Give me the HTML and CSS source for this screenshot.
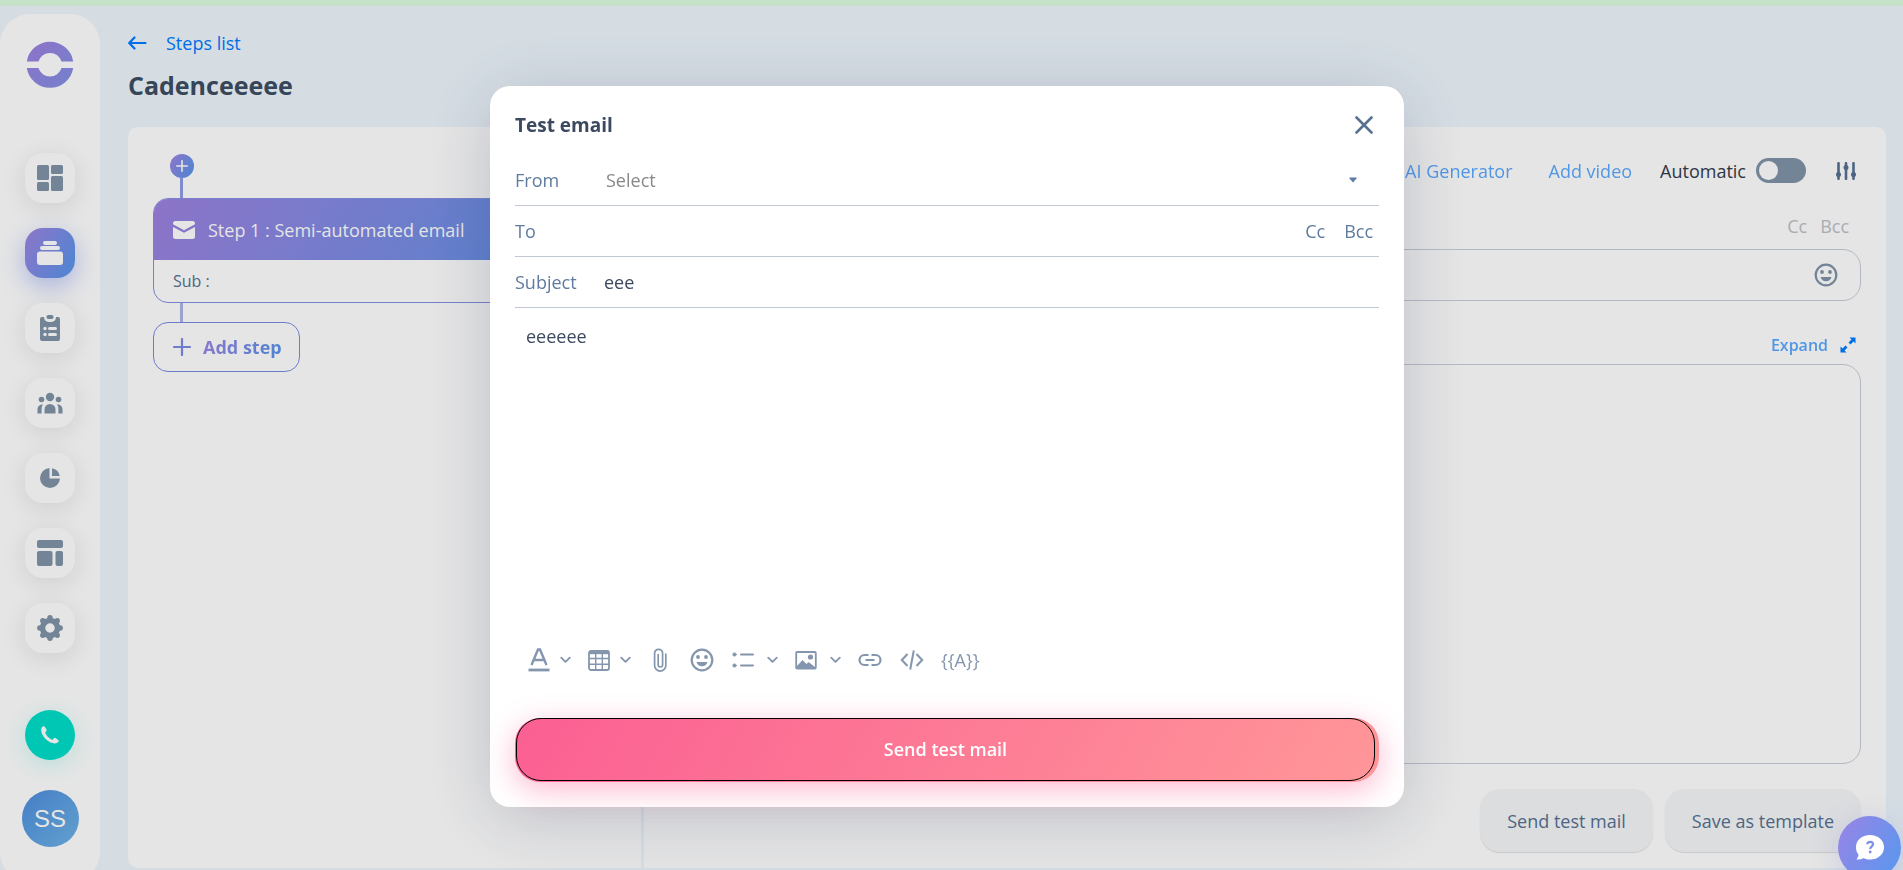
FILE: index.html
```html
<!DOCTYPE html>
<html lang="en">
<head>
<meta charset="utf-8">
<title>Cadence - Test email</title>
<link rel="stylesheet" href="styles.css">
</head>
<body>
<svg class="defs" width="0" height="0" aria-hidden="true">
  <defs>
    <linearGradient id="brand" x1="0" y1="0" x2="1" y2="1"><stop offset="0" stop-color="#9f80e0"/><stop offset="1" stop-color="#8190e4"/></linearGradient>
    <symbol id="chev" viewBox="0 0 11 8"><path d="M1.200 1.600l4.300 4.300 4.300-4.300" fill="none" stroke="currentColor" stroke-width="1.800" stroke-linecap="round" stroke-linejoin="round"/></symbol>
    <symbol id="smile" viewBox="0 0 24 24"><circle cx="12" cy="12" r="10.300" fill="none" stroke="currentColor" stroke-width="2.200"/><circle cx="8" cy="9" r="1.900" fill="currentColor"/><circle cx="16" cy="9" r="1.900" fill="currentColor"/><path d="M6.500 14h11c-.7 2.700-2.900 4.300-5.500 4.300S7.200 16.700 6.500 14z" fill="currentColor"/></symbol>
  </defs>
</svg>
<div class="topbar"></div>
<div class="app">
  <nav class="sidebar" aria-label="Main">
    <svg class="logo" viewBox="0 0 48 48" fill="url(#brand)"><path d="M.8 21.500A23.500 23.500 0 0 1 47.200 21.500H35.500A12 12 0 0 0 12.500 21.500zM.8 28A23.500 23.500 0 0 0 47.200 28H35.500A12 12 0 0 1 12.500 28z"/></svg>
    <div class="nav-items">
      <a class="nav-item" href="#" aria-label="Dashboard"><svg width="26" height="26" viewBox="0 0 26 26" fill="currentColor"><rect x="0" y="0" width="12" height="15" rx="1.500"/><rect x="14" y="0" width="12" height="9" rx="1.500"/><rect x="0" y="17" width="12" height="9" rx="1.500"/><rect x="14" y="11" width="12" height="15" rx="1.500"/></svg></a>
      <a class="nav-item active" href="#" aria-label="Cadences"><svg width="26" height="26" viewBox="0 0 26 26" fill="currentColor"><rect x="6" y="1" width="14" height="4" rx="2"/><rect x="3" y="6" width="20" height="4" rx="2"/><rect x="0" y="11.500" width="26" height="13.500" rx="3"/></svg></a>
      <a class="nav-item" href="#" aria-label="Tasks"><svg width="20" height="26" viewBox="0 0 20 26"><path d="M2 2h2c0 3 2 5 6 5s6-2 6-5h2a2 2 0 0 1 2 2v20a2 2 0 0 1-2 2H2a2 2 0 0 1-2-2V4a2 2 0 0 1 2-2z" fill="currentColor"/><rect x="6.500" y="0" width="7" height="4" rx="1.800" fill="currentColor"/><g fill="#fff"><rect x="8" y="12" width="9" height="3" rx="1.500"/><rect x="8" y="18" width="9" height="3" rx="1.500"/><circle cx="5" cy="13.500" r="1.700"/><circle cx="5" cy="19.500" r="1.700"/></g></svg></a>
      <a class="nav-item" href="#" aria-label="People"><svg width="26" height="22" viewBox="0 0 26 22" fill="currentColor"><circle cx="13" cy="5" r="4.200"/><circle cx="4.500" cy="7.500" r="2.800"/><circle cx="21.500" cy="7.500" r="2.800"/><path d="M7.500 21.500v-4a5.500 5.500 0 0 1 11 0v4zM.5 21.500v-4c0-3 2-5 5.500-5-1.200 1.600-1.400 3-1.400 5v4zM25.500 21.500v-4c0-3-2-5-5.500-5 1.200 1.600 1.400 3 1.400 5v4z"/></svg></a>
      <a class="nav-item" href="#" aria-label="Statistics"><svg width="20" height="20" viewBox="0 0 20 20" fill="currentColor"><path d="M9.500 0v10.500H20A10 10 0 1 1 9.500 0z"/><path d="M12 .2A10 10 0 0 1 19.800 8H12z"/></svg></a>
      <a class="nav-item" href="#" aria-label="Templates"><svg width="26" height="26" viewBox="0 0 26 26" fill="currentColor"><rect x="0" y="0" width="26" height="8" rx="2"/><rect x="0" y="11" width="15.500" height="15" rx="2"/><rect x="18.500" y="11" width="7.500" height="15" rx="2"/></svg></a>
      <a class="nav-item" href="#" aria-label="Settings"><svg width="26" height="26" viewBox="0 0 26 26"><circle cx="13" cy="13" r="7.500" fill="none" stroke="currentColor" stroke-width="5.500"/><g fill="currentColor"><circle cx="13" cy="2.800" r="2.700"/><circle cx="13" cy="23.200" r="2.700"/><circle cx="2.800" cy="13" r="2.700"/><circle cx="23.200" cy="13" r="2.700"/><circle cx="5.800" cy="5.800" r="2.700"/><circle cx="20.200" cy="5.800" r="2.700"/><circle cx="5.800" cy="20.200" r="2.700"/><circle cx="20.200" cy="20.200" r="2.700"/></g></svg></a>
    </div>
    <button class="call" type="button" aria-label="Call"><svg width="18" height="18" viewBox="0 0 18 18" fill="currentColor"><path d="M1.200.9C2 .2 3 0 3.600.5l1.900 3.100c.3.600.1 1.100-.3 1.600L4.100 6.500c1 3 3.700 6 7.300 7.400l1.300-1.400c.5-.5 1-.6 1.600-.4l3 2c.6.500.5 1.300 0 1.900-1.200 1.400-3.300 1.700-5.700 1.100C6 15.500 1.200 10.300.300 5.200 0 3.200.3 1.900 1.200.9z"/></svg></button>
    <button class="avatar" type="button">SS</button>
  </nav>
  <main class="main">
    <a class="back" href="#"><svg width="19" height="14" viewBox="0 0 19 14" fill="none" stroke="currentColor" stroke-width="2.200" stroke-linecap="round" stroke-linejoin="round"><path d="M17.500 7H1.500M6.500 1.500L1.200 7l5.300 5.500"/></svg>Steps list</a>
    <h1 class="title">Cadenceeeee</h1>
    <div class="panel">
      <section class="steps">
        <button class="add-dot" type="button" aria-label="Add step before"><svg width="12" height="12" viewBox="0 0 12 12" stroke="currentColor" stroke-width="1.600" stroke-linecap="round"><path d="M6 .8v10.400M.8 6h10.400"/></svg></button>
        <div class="link-line"></div>
        <article class="step">
          <header class="step-head"><svg width="22" height="18" viewBox="0 0 22 18" fill="currentColor"><path d="M2.500 0h17A2.500 2.500 0 0 1 22 2.500v.8L11 9.200 0 3.300v-.8A2.500 2.500 0 0 1 2.500 0z"/><path d="M0 6l11 5.800L22 6v9.500a2.500 2.500 0 0 1-2.500 2.500h-17A2.500 2.500 0 0 1 0 15.500z"/></svg>Step 1 : Semi-automated email</header>
          <p class="step-sub">Sub :</p>
        </article>
        <div class="link-line light"></div>
        <button class="add-step" type="button"><svg width="18" height="18" viewBox="0 0 18 18" stroke="#7b8be4" stroke-width="2.200" stroke-linecap="round"><path d="M9 1v16M1 9h16"/></svg><span>Add step</span></button>
      </section>
      <section class="compose">
        <div class="tools">
          <a class="soft-link" href="#">AI Generator</a>
          <a class="soft-link" href="#">Add video</a>
          <label class="auto">Automatic <input class="switch" type="checkbox"></label>
          <button class="plain" type="button" aria-label="Options"><svg width="20" height="18" viewBox="0 0 20 18" fill="none" stroke="currentColor" stroke-width="2.600" stroke-linecap="round"><path d="M2.500 1.200v15.600M10 1.200v15.600M17.500 1.200v15.600"/><g fill="currentColor" stroke="none"><circle cx="2.500" cy="12.500" r="2.500"/><circle cx="10" cy="5.500" r="2.500"/><circle cx="17.500" cy="12.500" r="2.500"/></g></svg></button>
        </div>
        <div class="copies"><button class="plain" type="button">Cc</button><button class="plain" type="button">Bcc</button></div>
        <div class="subject-box"><input type="text" aria-label="Subject"><svg width="24" height="24"><use href="#smile"/></svg></div>
        <button class="expand" type="button"><span>Expand</span><svg width="16" height="16" viewBox="0 0 16 16" fill="currentColor"><path d="M9.500.5h6v6l-2-2-3 3-2-2 3-3zM6.500 15.500h-6v-6l2 2 3-3 2 2-3 3z"/></svg></button>
        <textarea class="message" aria-label="Message"></textarea>
        <div class="actions"><button class="soft-button" type="button">Send test mail</button><button class="soft-button" type="button">Save as template</button></div>
      </section>
    </div>
  </main>
</div>

<div class="overlay">
  <form class="modal" role="dialog" aria-labelledby="modal-title">
    <header class="modal-head">
      <h2 id="modal-title">Test email</h2>
      <button class="plain" type="button" aria-label="Close"><svg width="18" height="18" viewBox="0 0 18 18" stroke="currentColor" stroke-width="2.600" stroke-linecap="round"><path d="M1.500 1.500l15 15M16.500 1.500l-15 15"/></svg></button>
    </header>
    <div class="row"><label for="from">From</label><select id="from"><option>Select</option></select><svg class="caret" width="8" height="6" viewBox="0 0 8 6" fill="currentColor"><path d="M.5.500h7v1L4 5.500.500 1.500z"/></svg></div>
    <div class="row"><label for="to">To</label><input id="to" type="text"><div class="row-copies"><button class="plain" type="button">Cc</button><button class="plain" type="button">Bcc</button></div></div>
    <div class="row"><label for="subject">Subject</label><input id="subject" type="text" value="eee"></div>
    <textarea class="editor" aria-label="Email body">eeeeee</textarea>
    <div class="toolbar">
      <button class="tool" type="button" aria-label="Text style"><svg width="24" height="24" viewBox="0 0 24 24" fill="none" stroke="currentColor"><path d="M4.500 17L11 1.500h2L19.500 17M7.500 12h9" stroke-width="2.400"/><path d="M1.500 22h21" stroke-width="2.800"/></svg><svg width="11" height="8"><use href="#chev"/></svg></button>
      <button class="tool" type="button" aria-label="Table"><svg width="24" height="24" viewBox="0 0 24 24" fill="none" stroke="currentColor"><rect x="2" y="3" width="20" height="19" rx="2" stroke-width="1.800"/><path d="M2 4.500h20" stroke-width="3.400"/><path d="M2 10.500h20M2 16.300h20M8.700 5.500v16M15.300 5.500v16" stroke-width="1.400"/></svg><svg width="11" height="8"><use href="#chev"/></svg></button>
      <button class="tool single" type="button" aria-label="Attach"><svg width="24" height="24" viewBox="0 0 24 24" fill="none" stroke="currentColor" stroke-width="1.700" stroke-linecap="round"><path d="M17.800 6v11.500a5.600 5.600 0 0 1-11.200 0V5.300a4 4 0 0 1 8 0v11.500a2.200 2.200 0 0 1-4.400 0V6.500"/></svg></button>
      <button class="tool single" type="button" aria-label="Emoji"><svg width="24" height="24"><use href="#smile"/></svg></button>
      <button class="tool wide" type="button" aria-label="List"><svg width="24" height="24" viewBox="0 0 24 24" stroke="currentColor" stroke-width="2" stroke-linecap="round"><path d="M10 6.500h12M10 17.500h12"/><circle cx="3.500" cy="6.500" r="1.600" fill="currentColor" stroke-width="1"/><circle cx="3.500" cy="17.500" r="1.600" fill="currentColor" stroke-width="1"/></svg><svg width="11" height="8"><use href="#chev"/></svg></button>
      <button class="tool wide" type="button" aria-label="Image"><svg width="24" height="24" viewBox="0 0 24 24"><rect x="2.200" y="4" width="19.600" height="16.500" rx="1" fill="none" stroke="currentColor" stroke-width="1.800"/><path d="M3 18l5.500-6 4 4 2-2 6.500 5v1H3z" fill="currentColor"/><circle cx="16.500" cy="9" r="2.600" fill="currentColor"/></svg><svg width="11" height="8"><use href="#chev"/></svg></button>
      <button class="tool single" type="button" aria-label="Link"><svg width="24" height="24" viewBox="0 0 24 24" fill="none" stroke="currentColor" stroke-width="2.200"><path d="M10.500 7H6.500a5 5 0 0 0 0 10h4M13.500 7h4a5 5 0 0 1 0 10h-4M7.500 12h9"/></svg></button>
      <button class="tool single" type="button" aria-label="Code"><svg width="24" height="24" viewBox="0 0 24 24" fill="none" stroke="currentColor" stroke-width="2"><path d="M7.500 6L1.800 12l5.700 6M16.500 6l5.700 6-5.700 6M13.800 2.500L10.200 21.500"/></svg></button>
      <button class="tool" type="button">{{A}}</button>
    </div>
    <div class="send"><button type="submit">Send test mail</button></div>
  </form>
</div>
<button class="help" type="button" aria-label="Help"><svg width="28" height="25" viewBox="0 0 28 25"><path d="M14 0c8 0 14 5 14 12.200S22 24.500 14 24.500c-2.500 0-4.500-.5-6.500-1.500-1.500 1-4 1.500-7 1.500 1.200-1.500 2-3.500 2-5C.8 17.500 0 15 0 12.200 0 5 6 0 14 0z" fill="#fff"/><path d="M11.300 9.300c.2-3.400 5.700-3.300 5.700 0 0 2.200-2.800 2.300-2.800 4.600" fill="none" stroke="#7b8fe9" stroke-width="2.200"/><circle cx="14.200" cy="17" r="1.400" fill="#7b8fe9"/></svg></button>
</body>
</html>
```

FILE: styles.css
```css
* { box-sizing: border-box; }

body {
  margin: 0;
  height: 100vh;
  overflow: hidden;
  background: #eef6fd;
  color: #3d4d61;
  font: 18px/24px "Open Sans", "Noto Sans", sans-serif;
}

button, input, select, textarea { font: inherit; color: inherit; margin: 0; }
button { padding: 0; border: 0; background: none; cursor: pointer; }
a { text-decoration: none; }
svg { display: block; flex: none; }
h1, h2, p { margin: 0; }

.defs { position: absolute; }
.topbar { height: 6px; background: #dcfbde; }
.app { display: flex; align-items: flex-start; gap: 28px; padding: 8px 17px 0 0; }

/* Sidebar */
.sidebar {
  flex: none;
  width: 100px;
  padding: 26px 0 35px;
  border-radius: 30px;
  background: #fff;
  display: flex;
  flex-direction: column;
  align-items: center;
}
.logo { width: 48px; height: 48px; margin-bottom: 65px; }
.nav-items { display: flex; flex-direction: column; gap: 25px; margin-bottom: 57px; }
.nav-item {
  width: 50px;
  height: 50px;
  border-radius: 18px;
  background: #fff;
  color: #8194a7;
  box-shadow: 0 5px 25px rgba(0, 0, 0, .1);
  display: grid;
  place-items: center;
}
.nav-item.active {
  background: linear-gradient(120deg, #9f84e2, #5495ea);
  color: #fff;
  box-shadow: 0 8px 25px rgba(90, 115, 235, .4);
}
.call {
  width: 50px;
  height: 50px;
  border-radius: 50%;
  background: #00dec8;
  color: #fff;
  box-shadow: 0 5px 25px rgba(0, 222, 200, .2);
  display: grid;
  place-items: center;
  margin-bottom: 30px;
}
.avatar {
  width: 57px;
  height: 57px;
  border-radius: 50%;
  background: linear-gradient(135deg, #4d8ddd, #6eb3e6);
  color: #fff;
  font: 24px/24px "Liberation Sans", Arial, sans-serif;
}

/* Main area */
.main { flex: 1; padding-top: 17px; }
.back {
  display: flex;
  align-items: center;
  gap: 19px;
  width: max-content;
  color: #007bff;
  font-weight: 500;
}
.title { margin: 13px 0 25px; font-size: 25px; line-height: 34px; font-weight: 700; }
.panel { display: flex; min-height: 741px; border-radius: 10px; background: #fff; }
.steps { width: 516px; padding: 27px 25px; border-right: 3px solid #eef6fd; }
.add-dot {
  width: 24px;
  height: 24px;
  margin-left: 17px;
  border-radius: 50%;
  background: linear-gradient(120deg, #9f84e2, #5495ea);
  color: #fff;
  display: grid;
  place-items: center;
}
.link-line { width: 3px; height: 20px; margin-left: 27px; background: #8f9ce5; }
.link-line.light { height: 19px; background: #adb4e8; }
.step { border: 1px solid #8490e2; border-radius: 15px; overflow: hidden; }
.step-head {
  display: flex;
  align-items: center;
  gap: 13px;
  height: 61px;
  padding: 0 19px;
  background: linear-gradient(120deg, #9d82df, #5c95e8);
  color: #fff;
  font-weight: 500;
}
.step-sub { padding: 9px 19px; font-size: 16px; color: #567191; }
.add-step {
  display: flex;
  align-items: center;
  gap: 12px;
  height: 50px;
  padding: 0 17px 0 19px;
  border: 1px solid #7b8be4;
  border-radius: 15px;
  font-weight: 700;
}
.add-step span {
  background: linear-gradient(120deg, #9f84e2, #5495ea);
  background-clip: text;
  color: transparent;
}

.compose { flex: 1; padding: 31px 25px 16px; display: flex; flex-direction: column; }
.tools { display: flex; justify-content: flex-end; align-items: center; padding-right: 5px; }
.soft-link { color: #007bff; opacity: .65; margin-right: 36px; }
.auto { display: flex; align-items: center; gap: 10px; margin: 0 30px 0 -8px; color: #343b4a; }
.switch {
  appearance: none;
  width: 50px;
  height: 25px;
  margin: 0;
  padding: 3px;
  border-radius: 13px;
  background: #8194a7;
}
.switch::before { content: ""; display: block; width: 19px; height: 19px; border-radius: 50%; background: #fff; }
.plain { color: #567191; }
.copies { display: flex; justify-content: flex-end; gap: 13px; padding: 31px 12px 11px; }
.copies .plain { color: #bdc1c7; }
.subject-box {
  display: flex;
  align-items: center;
  height: 52px;
  padding: 0 22px;
  border: 1px solid #c8cfdb;
  border-radius: 18px;
  color: #8194a7;
}
.subject-box input { flex: 1; border: 0; background: none; }
.expand {
  display: flex;
  align-items: center;
  align-self: flex-end;
  gap: 12px;
  margin: 32px 5px 7px 0;
  color: #007bff;
  font-size: 16px;
  font-weight: 600;
}
.expand span { opacity: .65; }
.message {
  height: 400px;
  border: 1px solid #c8cfdb;
  border-radius: 18px;
  background: none;
  resize: none;
}
.actions { display: flex; justify-content: flex-end; gap: 12px; margin-top: 25px; }
.soft-button {
  height: 63px;
  padding: 0 27px;
  border-radius: 20px;
  background: #f5f7f9;
  box-shadow: 0 1px 1px rgba(0, 0, 0, .12);
  color: #567191;
  font-weight: 500;
}

/* Test email dialog */
.overlay {
  position: fixed;
  inset: 0;
  padding: 22px 9px 0 0;
  background: rgba(0, 0, 0, .1);
  display: flex;
  align-items: center;
  justify-content: center;
}
.modal {
  width: 914px;
  max-width: 100%;
  padding: 25px;
  border-radius: 20px;
  background: #fff;
  box-shadow: 0 10px 70px rgba(30, 40, 80, .2);
}
.modal-head {
  display: flex;
  align-items: center;
  justify-content: space-between;
  height: 29px;
  margin-bottom: 15px;
  padding-right: 6px;
}
.modal-head h2 { font-size: 19px; line-height: 29px; font-weight: 700; color: #3b4a60; }
.row {
  display: flex;
  align-items: center;
  height: 51px;
  border-bottom: 1px solid #bfc8d3;
  color: #5f7b9f;
}
.row label { flex: none; width: 89px; }
.row input, .row select {
  flex: 1;
  min-width: 0;
  padding: 0;
  border: 0;
  outline: 0;
  background: none;
  color: #3b4a60;
}
.row select { appearance: none; padding-left: 2px; color: #888; }
.caret { margin-right: 22px; }
.row-copies { display: flex; gap: 19px; padding-right: 6px; }
.row-copies .plain { color: #5f7b9f; }
.editor {
  display: block;
  width: 100%;
  height: 326px;
  padding: 16px 11px;
  border: 0;
  outline: 0;
  resize: none;
  color: #3b4a60;
}
.toolbar { display: flex; align-items: center; gap: 16px; height: 52px; padding-left: 12px; color: #8496ad; }
.tool { display: flex; align-items: center; gap: 9px; font-weight: 500; }
.tool.wide { gap: 12px; }
.tool.single { padding: 0 1px; }
.send {
  margin-top: 32px;
  padding: 0 4px 1px 1px;
  border-radius: 25px;
  background: linear-gradient(120deg, #fb5f93, #ff9698);
  box-shadow: 0 8px 30px rgba(251, 80, 140, .4);
}
.send button {
  display: block;
  width: 100%;
  height: 63px;
  border: 1px solid #000;
  border-radius: 25px;
  color: #fff;
  font-weight: 600;
}

.help {
  position: fixed;
  right: 2px;
  bottom: -9px;
  width: 63px;
  height: 63px;
  border-radius: 50%;
  background: linear-gradient(120deg, #9a84e6, #5698ee);
  box-shadow: 0 5px 30px rgba(90, 100, 220, .2);
  display: grid;
  place-items: center;
}
```
